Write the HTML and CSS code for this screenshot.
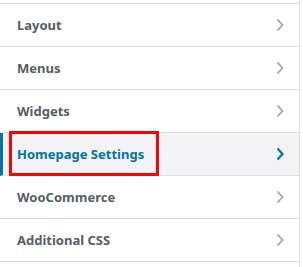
FILE: index.html
```html
<!DOCTYPE html>
<html lang="en">
<head>
    <meta charset="UTF-8">
    <meta name="viewport" content="width=device-width, initial-scale=1.0">
    <title>Customizer</title>
    <link rel="stylesheet" href="styles.css">
</head>

<body>
    <div class="panel">
        <ul class="sections">
            <li class="section"><span>Layout</span><svg class="chev" width="8" height="14" viewBox="0 0 8 14"><polyline points="1.5,1.5 6.5,7 1.5,12.5"/></svg></li>
            <li class="section"><span>Menus</span><svg class="chev" width="8" height="14" viewBox="0 0 8 14"><polyline points="1.5,1.5 6.5,7 1.5,12.5"/></svg></li>
            <li class="section"><span>Widgets</span><svg class="chev" width="8" height="14" viewBox="0 0 8 14"><polyline points="1.5,1.5 6.5,7 1.5,12.5"/></svg></li>
            <li class="section active"><span>Homepage Settings</span><svg class="chev" width="8" height="14" viewBox="0 0 8 14"><polyline points="1.5,1.5 6.5,7 1.5,12.5"/></svg>
                <div class="mark"></div>
            </li>
            <li class="section"><span>WooCommerce</span><svg class="chev" width="8" height="14" viewBox="0 0 8 14"><polyline points="1.5,1.5 6.5,7 1.5,12.5"/></svg></li>
            <li class="section"><span>Additional CSS</span><svg class="chev" width="8" height="14" viewBox="0 0 8 14"><polyline points="1.5,1.5 6.5,7 1.5,12.5"/></svg></li>
        </ul>
    </div>
</body>
</html>
```

FILE: styles.css
```css
/* Customizer section list */
* {
   box-sizing: border-box;
}

body {
   margin: 0;
   background: #fff;
   font-family: 'Noto Sans', 'DejaVu Sans', sans-serif;
}

.panel {
   width: 300px;
   height: 267px;
   padding-top: 3px;
   border-right: 1px solid #ddd;
}

.sections {
   list-style: none;
   margin: 0;
   padding: 0;
   border-top: 1px solid #ddd;
}

.section {
   position: relative;
   display: flex;
   align-items: center;
   justify-content: space-between;
   height: 43px;
   padding: 0 15px 0 17px;
   border-bottom: 1px solid #ddd;
   color: #555d66;
   font-size: 13px;
   font-weight: 700;
}

.chev {
   fill: none;
   stroke: #a0a5aa;
   stroke-width: 1.8;
}

.section.active {
   background: #f3f3f5;
   color: #0073aa;
   border-left: 3px solid #0073aa;
   padding-left: 14px;
}

.section.active .chev {
   stroke: #0073aa;
   stroke-width: 2.2;
}

/* red annotation box */
.mark {
   position: absolute;
   left: 6px;
   top: -2px;
   width: 150px;
   height: 45px;
   border: 3px solid #f00;
}
```
